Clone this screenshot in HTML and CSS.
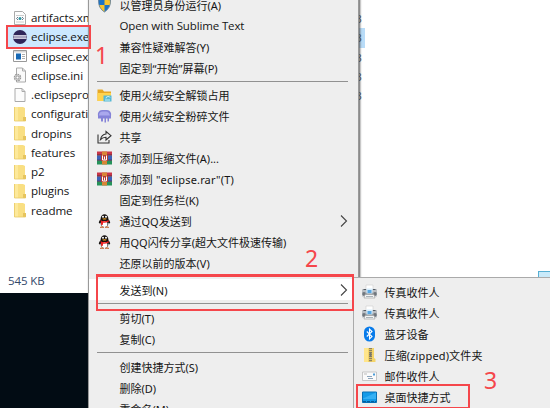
FILE: index.html
```
<!DOCTYPE html>
<html lang="zh-CN">

<head>
      <meta charset="UTF-8">
      <meta name="viewport" content="width=device-width, initial-scale=1.0">
      <title>eclipse</title>
      <link rel="stylesheet" href="styles.css">
</head>

<body>
      <!-- shared icons -->
      <svg class="defs">
            <symbol id="folder" viewBox="0 0 14 16">
                  <path d="M1 1h9l2 1v9l1 1v3H1z" fill="#f9df83" />
                  <path d="M1 1h4v14H1z" fill="#fde99b" />
                  <path d="M10 11h3v4h-3z" fill="#e6c45e" />
                  <path d="M1.5 1v14h11" fill="none" stroke="#e8c966" stroke-width=".8" />
            </symbol>
            <symbol id="rar" viewBox="0 0 15 15">
                  <path d="M0 1h15v4H0z" fill="#c93548" />
                  <path d="M0 5h15v5H0z" fill="#3c62b8" />
                  <path d="M0 10h15v4H0z" fill="#26935a" />
                  <path d="M0 4.5h15M0 9.7h15" stroke="#4a2738" stroke-width=".8" />
                  <path d="M5 1h5v13H5z" fill="#d98535" />
                  <path d="M4 4.5h7v6H4z" fill="#b53c32" />
                  <path d="M5.5 5v4.5h4V5M7.5 6v3" fill="none" stroke="#fff" />
            </symbol>
            <symbol id="qq" viewBox="0 0 15 15">
                  <path d="M3.500 6C3.500-1 11.500-1 11.500 6c2 2 2 4 1 4l-1-1c0 6-8 6-8 0l-1 1c-1 0-1-2 1-4z" fill="#15110f" />
                  <ellipse cx="7.500" cy="10.500" rx="3" ry="3" fill="#fff" />
                  <circle cx="6" cy="3.300" r="1" fill="#fff" />
                  <circle cx="9" cy="3.300" r="1" fill="#fff" />
                  <path d="M5 5.200q2.500-1 5 0-2.500 1.800-5 0z" fill="#f5a623" />
                  <path d="M3.300 6.500q4 2.500 8.400 0v1.800q-3 1.200-5.700.9v2H4V8.600z" fill="#e22" />
                  <path d="M3 14q2-2 4 0zM8 14q2-2 4 0z" fill="#f5a623" stroke="#a32" stroke-width=".4" />
            </symbol>
            <symbol id="printer" viewBox="0 0 15 16">
                  <path d="M4 1h7v5H4z" fill="#fff" stroke="#ccc" stroke-width=".6" />
                  <path d="M0 6q0-1 1-1h13q1 0 1 1v6.500H0z" fill="#b9bec3" />
                  <path d="M0 8.500h15v2.500H0z" fill="#8a9197" />
                  <path d="M1.500 5.500H4M11 5.500h2.500M2 8v4M13 8v4" stroke="#545b62" />
                  <path d="M4.500 4.500h6v5h-6z" fill="#d6edfc" />
                  <path d="M5.500 6h4v3h-4z" fill="#56a6e2" />
                  <path d="M3 10.500h9l1 3.500H2z" fill="#f3f5f6" stroke="#999" stroke-width=".6" />
                  <path d="M4 12.500h7" stroke="#8a959e" stroke-width=".7" />
            </symbol>
      </svg>

      <div id="desktop">
            <div id="explorer">
                  <ul id="files">
                        <li>
                              <svg viewBox="0 0 14 16"><path d="M1.500 1.500h8l3 3v10h-11z" fill="#fdfdfd" stroke="#aaa" /><path d="M3 5.500h8M3 12h8" stroke="#ccc" /><path d="M5 7L3.500 8.500 5 10M9 7l1.500 1.500L9 10" fill="none" stroke="#678" /><circle cx="7" cy="8.500" r="1.500" fill="#2b91a0" /></svg>
                              <span>artifacts.xml</span>
                        </li>
                        <li class="selected">
                              <svg viewBox="0 0 14 16"><circle cx="7" cy="8" r="7" fill="#30265a" /><path d="M.4 6h13.200v4H.4z" fill="#aaa5c0" /><path d="M.4 6.500h13.200M.4 9.500h13.200" stroke="#dcd8e6" stroke-width=".7" /></svg>
                              <span>eclipse.exe</span>
                        </li>
                        <li>
                              <svg viewBox="0 0 14 16"><path d="M.5 2.500h13v11H.5z" fill="#fff" stroke="#999" /><path d="M1 3h12v1.500H1z" fill="#d5d5d5" /><path d="M3 5.500h5v6H3z" fill="#1769b5" /><path d="M9 6.500h3M9 8.500h3M9 10.500h3" stroke="#999" stroke-width=".8" /></svg>
                              <span>eclipsec.exe</span>
                        </li>
                        <li>
                              <svg viewBox="0 0 14 16"><path d="M3.500 1h6l3 3v11h-9z" fill="#fafafa" stroke="#aaa" /><path d="M9.500 1v3h3" fill="none" stroke="#aaa" /><circle cx="4.500" cy="10.500" r="3" fill="#eee" stroke="#999" stroke-width="1.500" stroke-dasharray="1.600 .7" /><circle cx="4.500" cy="10.500" r="1.500" fill="#fff" stroke="#999" /></svg>
                              <span>eclipse.ini</span>
                        </li>
                        <li>
                              <svg viewBox="0 0 14 16"><path d="M2 1.500h7l3 3v10H2z" fill="#fcfcfc" stroke="#aaa" /><path d="M9 1.500v3h3" fill="none" stroke="#aaa" /></svg>
                              <span>.eclipseproduct</span>
                        </li>
                        <li><svg><use href="#folder" /></svg><span>configuration</span></li>
                        <li><svg><use href="#folder" /></svg><span>dropins</span></li>
                        <li><svg><use href="#folder" /></svg><span>features</span></li>
                        <li><svg><use href="#folder" /></svg><span>p2</span></li>
                        <li><svg><use href="#folder" /></svg><span>plugins</span></li>
                        <li><svg><use href="#folder" /></svg><span>readme</span></li>
                  </ul>
                  <div id="status">545 KB</div>
            </div>
            <div id="content">
                  <div class="size">3</div>
                  <div class="size active">3</div>
                  <div class="size">3</div>
                  <div class="size">3</div>
                  <div class="size">3</div>
                  <div id="view-button"></div>
            </div>
      </div>

      <div id="menu">
            <div class="item">
                  <svg viewBox="0 0 15 16"><path d="M7.500 1q3 2 6 2Q14 11 7.500 15 1 11 1.500 3q3 0 6-2z" fill="#1b74c5" /><path d="M7.500 1q3 2 6 2 .2 3-.5 5H7.500zM7.500 8v7Q3 12 2 8z" fill="#f8c62e" /><path d="M7.500 1q3 2 6 2Q14 11 7.500 15 1 11 1.500 3q3 0 6-2z" fill="none" stroke="#67809a" stroke-width=".8" /></svg>
                  <span>以管理员身份运行(A)</span>
            </div>
            <div class="item"><i></i><span class="latin">Open with Sublime Text</span></div>
            <div class="item"><i></i><span>兼容性疑难解答(Y)</span></div>
            <div class="item"><i></i><span>固定到“开始”屏幕(P)</span></div>
            <div class="line"></div>
            <div class="item">
                  <svg viewBox="0 0 15 15"><path d="M.5 2h5l1.500 2h7v9.500H.5z" fill="#e7a824" /><path d="M.5 5.500h13.500v8H.5z" fill="#ffd34e" /><path d="M6.500 8h8v6h-8z" fill="#55b8d5" /><path d="M8 12.500h5M9 11q0-2 2-2t2 1" fill="none" stroke="#c9f1f5" /></svg>
                  <span>使用火绒安全解锁占用</span>
            </div>
            <div class="item">
                  <svg viewBox="0 0 15 15"><path d="M1 8Q0 2 5 1.500h5Q15 2 14 8v2h-2v3h-1.500v-3H9v4H7.500v-4H6v3H4v-3H1z" fill="#8583d8" /><path d="M2 7q0-4 4-4h3q3 0 4 4z" fill="#aaa8ed" /></svg>
                  <span>使用火绒安全粉碎文件</span>
            </div>
            <div class="item">
                  <svg viewBox="0 0 15 15"><path d="M1 5v8.500h11v-3M3.500 10q1-5 5.500-5.500V2l5 4.200-5 4.300V7.800Q5.500 8 3.500 10z" fill="none" stroke="#333" stroke-width="1.100" /></svg>
                  <span>共享</span>
            </div>
            <div class="item"><svg><use href="#rar" /></svg><span>添加到压缩文件(A)...</span></div>
            <div class="item"><svg><use href="#rar" /></svg><span class="rar">添加到 "eclipse.rar"(T)</span></div>
            <div class="item"><i></i><span>固定到任务栏(K)</span></div>
            <div class="item">
                  <svg><use href="#qq" /></svg><span>通过QQ发送到</span>
                  <svg class="arrow" viewBox="0 0 8 12"><path d="M1 .5L6.500 6 1 11.500" /></svg>
            </div>
            <div class="item"><svg><use href="#qq" /></svg><span>用QQ闪传分享(超大文件极速传输)</span></div>
            <div class="item"><i></i><span>还原以前的版本(V)</span></div>
            <div class="line"></div>
            <div class="item hover">
                  <i></i><span>发送到(N)</span>
                  <svg class="arrow" viewBox="0 0 8 12"><path d="M1 .5L6.500 6 1 11.500" /></svg>
            </div>
            <div class="line tall"></div>
            <div class="item"><i></i><span>剪切(T)</span></div>
            <div class="item"><i></i><span>复制(C)</span></div>
            <div class="line tall"></div>
            <div class="item"><i></i><span>创建快捷方式(S)</span></div>
            <div class="item"><i></i><span>删除(D)</span></div>
            <div class="item"><i></i><span>重命名(M)</span></div>
      </div>

      <div id="submenu">
            <div class="item"><svg><use href="#printer" /></svg><span>传真收件人</span></div>
            <div class="item"><svg><use href="#printer" /></svg><span>传真收件人</span></div>
            <div class="item">
                  <svg viewBox="0 0 15 15"><rect x="2" width="11" height="15" rx="5.500" fill="#087bea" /><path d="M4.800 5l5.200 5-2.500 2.500v-10L10 5l-5.200 5" fill="none" stroke="#fff" stroke-width="1.100" /></svg>
                  <span>蓝牙设备</span>
            </div>
            <div class="item">
                  <svg viewBox="0 0 15 16"><path d="M2 1h10v10l1.500 1v3H2z" fill="#f4d468" /><path d="M2 1h4v14H2z" fill="#ffe58b" /><path d="M8.500 1v14" stroke="#8c8261" stroke-width="3" stroke-dasharray="1.200 .8" /><path d="M7.500 5h2v5h-2z" fill="#77776f" /></svg>
                  <span class="zip">压缩(zipped)文件夹</span>
            </div>
            <div class="item">
                  <svg viewBox="0 0 15 15"><path d="M.5 3.500h14v8.500H.5z" fill="#fafafa" stroke="#bbb" stroke-width=".8" /><path d="M11 5h2v2h-2z" fill="#4a9bd8" /><path d="M5 8h5M6 10h5" stroke="#8ca4bb" /><path d="M2 5.500h3" stroke="#bbb" /></svg>
                  <span>邮件收件人</span>
            </div>
            <div class="item">
                  <svg viewBox="0 0 15 15"><path d="M.5 2.500h14v10.500H.5z" fill="#149be8" stroke="#0870b5" /><path d="M1 9l13-6v6.500H1z" fill="#35b0f4" /><path d="M1 12h13" stroke="#075c9a" stroke-dasharray="3 1" /></svg>
                  <span>桌面快捷方式</span>
            </div>
      </div>

      <!-- step marks -->
      <div class="frame frame1"></div>
      <div class="frame frame2"></div>
      <div class="frame frame3"></div>
      <b class="step step1">1</b>
      <b class="step step2">2</b>
      <b class="step step3">3</b>
</body>

</html>
```
FILE: styles.css
```
* {
      box-sizing: border-box;
}

body {
      position: relative;
      width: 550px;
      height: 408px;
      margin: 0;
      overflow: hidden;
      background-color: white;
      color: #151515;
      font-family: "Noto Sans", "Noto Sans CJK SC", sans-serif;
      font-size: 11px;
}

.defs {
      position: absolute;
      width: 0;
      height: 0;
}

#desktop {
      display: flex;
      height: 408px;
      background-color: #020c14;
}

#explorer {
      width: 88px;
      height: 293px;
      background-color: white;
      overflow: hidden;
}

#files {
      height: 271px;
      margin: 0;
      padding: 8px 0 0 8px;
      list-style: none;
}

#files li {
      display: flex;
      align-items: center;
      height: 19.25px;
      padding-left: 5px;
      font-family: "Open Sans", sans-serif;
      font-size: 11.6px;
      letter-spacing: -0.1px;
      white-space: nowrap;
}

#files svg {
      flex: none;
      width: 14px;
      height: 16px;
      margin-right: 4px;
}

#files .selected {
      background-color: #cce8ff;
}

#status {
      padding-left: 8px;
      color: #33496b;
      font-family: "Open Sans", sans-serif;
      font-size: 11.5px;
      line-height: 20px;
      letter-spacing: -0.1px;
}

#content {
      position: relative;
      flex: 1;
      padding: 9px 0 0 262px;
      background-color: white;
}

.size {
      width: 15px;
      height: 19.25px;
      padding-left: 5.5px;
      color: #345;
      font-size: 11px;
      line-height: 19px;
}

.active {
      background-color: #b9dcf8;
}

#view-button {
      position: absolute;
      left: 450px;
      top: 271px;
      width: 20px;
      height: 14px;
      border: 1px solid #57afd3;
      background-color: #c9eafa;
}

#menu {
      position: absolute;
      left: 88px;
      top: -6px;
      width: 271px;
      height: 420px;
      border: 1px solid #999;
      border-width: 0 1px;
      background-color: #eee;
      box-shadow: 1px 0 2px #555;
}

.item {
      display: flex;
      align-items: center;
      height: 21px;
      padding: 0 10px 0 8px;
      white-space: nowrap;
}

.item svg,
.item i {
      flex: none;
      width: 15px;
      height: 16px;
      margin-right: 7.5px;
}

.item .arrow {
      width: 8px;
      height: 12px;
      margin: 0 0 0 auto;
      fill: none;
      stroke: #444;
      stroke-width: 1.1;
}

.latin {
      font-family: "Open Sans", sans-serif;
      font-size: 11.5px;
      letter-spacing: -0.13px;
}

.rar,
.zip {
      letter-spacing: 0.15px;
}

.hover {
      background-color: white;
}

.line {
      height: 6px;
      margin: 0 10px 0 8px;
      padding-top: 3px;
}

.line::before {
      content: "";
      display: block;
      height: 1px;
      background-color: #919191;
}

.tall {
      height: 7px;
}

#submenu {
      position: absolute;
      left: 353px;
      top: 277px;
      width: 210px;
      height: 140px;
      padding-top: 3px;
      border: 1px solid #aaa;
      background-color: #eee;
}

.frame {
      position: absolute;
      border: 2px solid #f5464b;
}

.frame1 {
      left: 6px;
      top: 25px;
      width: 85px;
      height: 24px;
}

.frame2 {
      left: 96px;
      top: 274px;
      width: 258px;
      height: 37px;
      border-width: 3px 2px 2px;
}

.frame3 {
      left: 356px;
      top: 384px;
      width: 114px;
      height: 25px;
}

.step {
      position: absolute;
      color: #f5464b;
      font-family: "Noto Sans", sans-serif;
      font-size: 23px;
      font-weight: normal;
      line-height: 24px;
}

.step1 {
      left: 95px;
      top: 43px;
}

.step2 {
      left: 305px;
      top: 246px;
}

.step3 {
      left: 484px;
      top: 368px;
}
```
